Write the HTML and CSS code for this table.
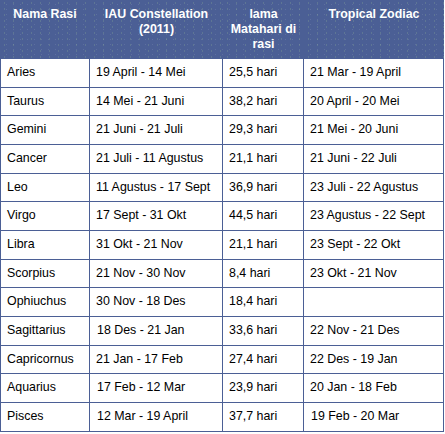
FILE: index.html
```html
<!DOCTYPE html>
<html lang="id">
<head>
<meta charset="utf-8">
<title>Rasi</title>
<link rel="stylesheet" href="styles.css">
</head>
<body>
<table class="zodiac">
  <colgroup>
    <col class="c1"><col class="c2"><col class="c3"><col class="c4">
  </colgroup>
  <thead>
    <tr>
      <th>Nama Rasi</th>
      <th>IAU Constellation (2011)</th>
      <th>lama Matahari di rasi</th>
      <th>Tropical Zodiac</th>
    </tr>
  </thead>
  <tbody>
    <tr><td>Aries</td><td>19 April - 14 Mei</td><td>25,5 hari</td><td>21 Mar - 19 April</td></tr>
    <tr><td>Taurus</td><td>14 Mei - 21 Juni</td><td>38,2 hari</td><td>20 April - 20 Mei</td></tr>
    <tr><td>Gemini</td><td>21 Juni - 21 Juli</td><td>29,3 hari</td><td>21 Mei - 20 Juni</td></tr>
    <tr><td>Cancer</td><td>21 Juli - 11 Agustus</td><td>21,1 hari</td><td>21 Juni - 22 Juli</td></tr>
    <tr><td>Leo</td><td>11 Agustus - 17 Sept</td><td>36,9 hari</td><td>23 Juli - 22 Agustus</td></tr>
    <tr><td>Virgo</td><td>17 Sept - 31 Okt</td><td>44,5 hari</td><td>23 Agustus - 22 Sept</td></tr>
    <tr><td>Libra</td><td>31 Okt - 21 Nov</td><td>21,1 hari</td><td>23 Sept - 22 Okt</td></tr>
    <tr><td>Scorpius</td><td>21 Nov - 30 Nov</td><td>8,4 hari</td><td>23 Okt - 21 Nov</td></tr>
    <tr><td>Ophiuchus</td><td>30 Nov - 18 Des</td><td>18,4 hari</td><td></td></tr>
    <tr><td>Sagittarius</td><td class="ind">18 Des - 21 Jan</td><td>33,6 hari</td><td>22 Nov - 21 Des</td></tr>
    <tr><td>Capricornus</td><td>21 Jan - 17 Feb</td><td>27,4 hari</td><td>22 Des - 19 Jan</td></tr>
    <tr><td>Aquarius</td><td class="ind">17 Feb - 12 Mar</td><td>23,9 hari</td><td>20 Jan - 18 Feb</td></tr>
    <tr><td>Pisces</td><td class="ind">12 Mar - 19 April</td><td>37,7 hari</td><td class="ind">19 Feb - 20 Mar</td></tr>
  </tbody>
</table>
</body>
</html>
```

FILE: styles.css
```css
html, body {
  margin: 0;
  padding: 0;
  background: #ffffff;
}

.zodiac {
  border-collapse: separate;
  border-spacing: 0;
  table-layout: fixed;
  width: 444px;
  font-family: "Liberation Sans", Arial, Helvetica, sans-serif;
  font-size: 12.4px;
  color: #000000;
}

.c1 { width: 90px; }
.c2 { width: 133px; }
.c3 { width: 81px; }
.c4 { width: 140px; }

.zodiac th {
  background-color: #4b5f95;
  background-image:
    radial-gradient(circle, rgba(160, 200, 150, 0.22) 0.6px, transparent 0.9px),
    radial-gradient(circle, rgba(255, 255, 255, 0.10) 0.6px, transparent 0.9px);
  background-size: 9px 6px, 7px 5px;
  background-position: 0 0, 3px 2px;
  color: #ffffff;
  font-weight: bold;
  text-align: center;
  vertical-align: top;
  line-height: 15px;
  padding: 7px 7px 7px 7px;
  height: 59px;
  box-sizing: border-box;
}

.zodiac td {
  text-align: left;
  vertical-align: middle;
  line-height: 15.65px;
  padding: 6px 6px 6px 6px;
  border-right: 1px solid #4b5f95;
  border-bottom: 1px solid #4b5f95;
  white-space: nowrap;
}

.zodiac td:first-child {
  border-left: 1px solid #4b5f95;
}

.zodiac td.ind {
  padding-left: 7px;
}
```
